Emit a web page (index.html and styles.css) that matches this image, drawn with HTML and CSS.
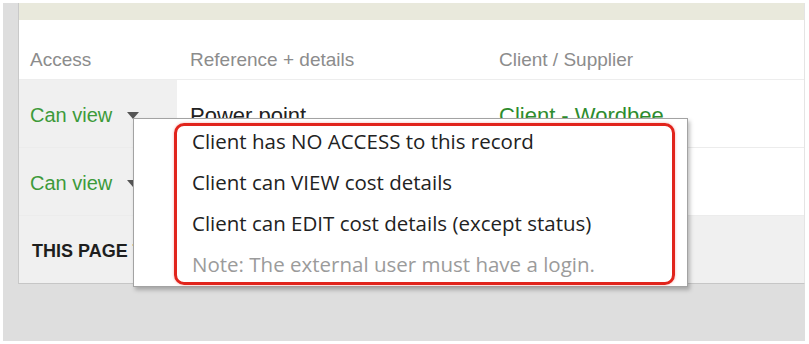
FILE: index.html
```html
<!DOCTYPE html>
<html lang="en">
<head>
<meta charset="UTF-8">
<meta name="viewport" content="width=device-width, initial-scale=1.0">
<title>Access</title>
<link rel="stylesheet" href="styles.css">
</head>
<body>

<div class="frame">
<div class="panel">

<div class="toolbar"></div>

<div class="row head">
<div class="cell access">Access</div>
<div class="cell ref">Reference + details</div>
<div class="cell client">Client / Supplier</div>
</div>

<div class="row">
<div class="cell access"><span class="green">Can view</span><span class="arrow"></span></div>
<div class="cell ref big">Power point</div>
<div class="cell client big"><span class="green dark">Client - Wordbee</span></div>
</div>

<div class="row">
<div class="cell access"><span class="green">Can view</span><span class="arrow"></span></div>
<div class="cell ref"></div>
<div class="cell client"></div>
</div>

<div class="row foot">
<div class="cell total">THIS PAGE TOTAL</div>
</div>

<div class="dropdown">
<div class="mark">
<div class="item">Client has NO ACCESS to this record</div>
<div class="item">Client can VIEW cost details</div>
<div class="item">Client can EDIT cost details (except status)</div>
<div class="item note">Note: The external user must have a login.</div>
</div>
</div>

</div>
</div>

</body>
</html>
```

FILE: styles.css
```css
body{
    margin:0;
    background:white;
    font-family:"Liberation Sans",Arial,sans-serif;
}

.frame{
    margin:3px;
    width:787px;
    height:338px;
    padding-left:15px;
    background:#dedede;
}

.panel{
    position:relative;
    background:white;
    border-left:1px solid #c9c9c9;
    border-right:1px solid #e4e4e4;
    border-bottom:1px solid #c6c6c6;
}

.toolbar{
    height:17px;
    background:#e9e9dc;
}

.row{
    display:flex;
    height:67px;
    border-bottom:1px solid #ececec;
}

.row.head{
    height:59px;
    border-bottom:1px solid #ededed;
}

.cell{
    display:flex;
    align-items:center;
    padding-top:4px;
    box-sizing:border-box;
    font-size:20px;
    color:#222;
}

.cell.big{
    font-size:22px;
}

.head .cell{
    padding-top:20px;
    font-size:19px;
    color:#8c8c8c;
}

.access{
    width:158px;
    padding-left:11px;
    background:#f0f0f0;
}

.head .access{
    background:white;
}

.ref{
    width:309px;
    padding-left:13px;
}

.client{
    padding-left:13px;
}

.green{
    color:#3d9a3a;
}

.green.dark{
    color:#2e8c2e;
}

.arrow{
    width:0;
    height:0;
    margin-left:15px;
    border-left:6px solid transparent;
    border-right:6px solid transparent;
    border-top:7px solid #555;
}

.row.foot{
    height:67px;
    border-bottom:0;
    background:#f0f0f0;
}

.total{
    padding-left:13px;
    font-weight:bold;
    font-size:18px;
    color:#1e1e1e;
}

.dropdown{
    position:absolute;
    left:114px;
    top:115px;
    box-sizing:border-box;
    width:555px;
    height:169px;
    padding:4px 12px 0 40px;
    background:white;
    border:1px solid #a3a3a3;
    box-shadow:2px 3px 4px rgba(0,0,0,0.25);
}

.mark{
    display:flex;
    flex-direction:column;
    gap:11px;
    padding:0 0 3px 15px;
    border:3px solid #e1241c;
    border-radius:10px;
    box-shadow:0 0 3px rgba(225,36,28,0.35);
}

.item{
    height:30px;
    line-height:30px;
    font-family:"Open Sans",sans-serif;
    font-size:20.5px;
    color:#222;
    white-space:nowrap;
}

.item.note{
    color:#9b9b9b;
}
```
